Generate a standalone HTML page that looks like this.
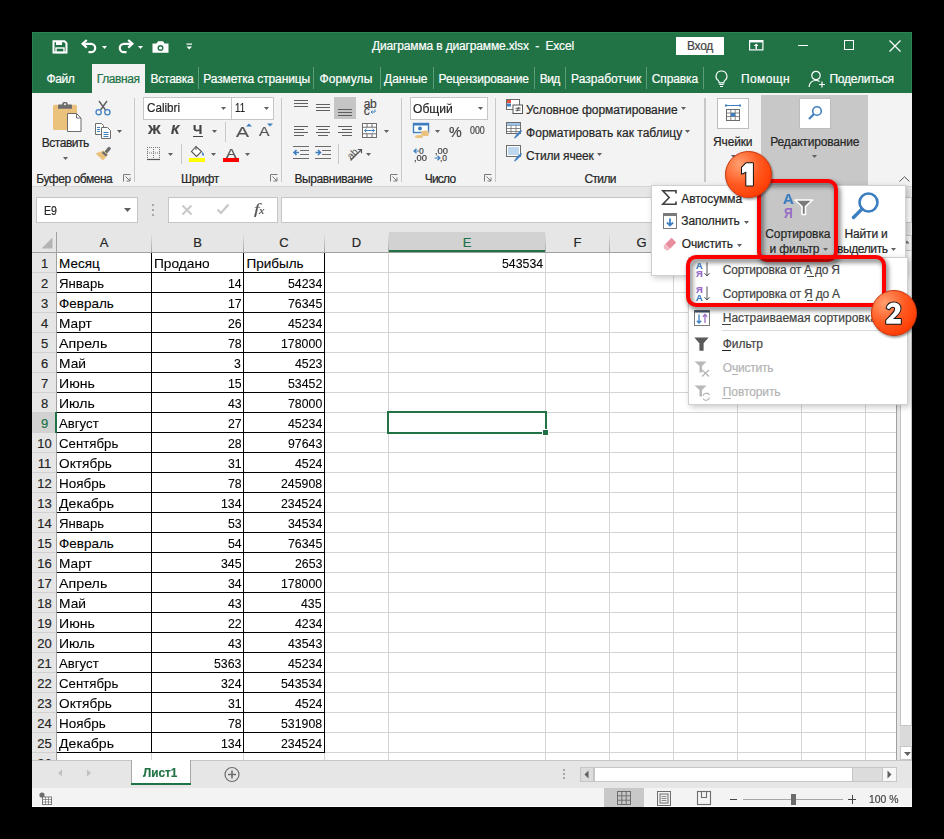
<!DOCTYPE html><html><head><meta charset="utf-8"><style>
html,body{margin:0;padding:0;width:944px;height:839px;overflow:hidden;background:#000}
body>*{position:absolute}
span{white-space:pre;transform-origin:0 0;font-family:'Liberation Sans',sans-serif;-webkit-text-stroke:0.2px currentColor}
svg{overflow:visible}
</style></head><body>
<div style="left:0px;top:0px;width:944px;height:839px;background:#000;"></div>
<div style="left:32px;top:32px;width:880px;height:775px;background:#f3f3f3;"></div>
<div style="left:32px;top:32px;width:880px;height:61px;background:#217346;"></div>
<div style="left:32px;top:32px;width:880px;height:1px;background:#2b8552;"></div>
<div style="left:32px;top:32px;width:1px;height:61px;background:#2b8552;"></div>
<div style="left:911px;top:32px;width:1px;height:61px;background:#2b8552;"></div>
<svg style="left:52px;top:40px;" width="16" height="14" viewBox="0 0 16 14"><path d="M1.5 1.2H12.5L14.5 3.2V12.5H1.5Z" fill="none" stroke="#fff" stroke-width="2"/><rect x="4" y="1.5" width="6" height="3.5" fill="#fff"/><rect x="4" y="8" width="8" height="4.5" fill="none" stroke="#fff" stroke-width="1.4"/></svg>
<svg style="left:81px;top:39px;" width="17" height="15" viewBox="0 0 17 15"><path d="M3 4.8H10A4.2 4.2 0 0 1 10 13.2H7.5" fill="none" stroke="#fff" stroke-width="2.2"/><path d="M5.8 1L1.6 4.8L5.8 8.6" fill="none" stroke="#fff" stroke-width="2.2"/></svg>
<svg style="left:102px;top:45.5px;" width="5" height="3" viewBox="0 0 5 3"><path d="M0 0H5L2.5 3Z" fill="#fff"/></svg>
<svg style="left:117px;top:39px;" width="17" height="15" viewBox="0 0 17 15"><path d="M14 4.8H7A4.2 4.2 0 0 0 7 13.2H9.5" fill="none" stroke="#fff" stroke-width="2.2"/><path d="M11.2 1L15.4 4.8L11.2 8.6" fill="none" stroke="#fff" stroke-width="2.2"/></svg>
<svg style="left:138px;top:45.5px;" width="5" height="3" viewBox="0 0 5 3"><path d="M0 0H5L2.5 3Z" fill="#fff"/></svg>
<svg style="left:152px;top:41px;" width="17" height="12" viewBox="0 0 17 12"><path d="M0.5 2.5H4.5L6 0.3H11L12.5 2.5H16.5V11.7H0.5Z" fill="#fff"/><circle cx="8.5" cy="7" r="3" fill="#217346"/><circle cx="8.5" cy="7" r="1.6" fill="#fff"/></svg>
<svg style="left:186px;top:43px;" width="7" height="7" viewBox="0 0 7 7"><rect x="0.5" y="0.5" width="5.5" height="1.2" fill="#fff"/><path d="M0.5 3.5H6L3.25 6.5Z" fill="#fff"/></svg>
<span style="left:372.00px;top:39.80px;font-size:12px;line-height:12px;color:#fff;font-weight:400;font-family:'Liberation Sans',sans-serif;letter-spacing:-0.150px;">Диаграмма в диаграмме.xlsx  -  Excel</span>
<div style="left:676px;top:37px;width:48px;height:18px;background:#fff;"></div>
<span style="left:687.00px;top:39.80px;font-size:12px;line-height:12px;color:#444;font-weight:400;font-family:'Liberation Sans',sans-serif;letter-spacing:-0.289px;">Вход</span>
<svg style="left:749px;top:40px;" width="15" height="11" viewBox="0 0 15 11"><rect x="0.6" y="0.6" width="13.3" height="9.3" fill="none" stroke="#fff" stroke-width="1.2"/><rect x="0.6" y="0.6" width="13.3" height="1.8" fill="#fff"/><path d="M7.25 3.5L4.8 6H6.5V9H8V6H9.7Z" fill="#fff"/></svg>
<div style="left:798px;top:45px;width:10px;height:1px;background:#fff;"></div>
<div style="left:844px;top:40px;width:10px;height:10px;box-sizing:border-box;border:1px solid #fff;background:transparent;"></div>
<svg style="left:889px;top:40px;" width="12" height="12" viewBox="0 0 12 12"><path d="M0.5 0.5L11.5 11.5M11.5 0.5L0.5 11.5" stroke="#fff" stroke-width="1.2"/></svg>
<div style="left:92px;top:64px;width:53px;height:29px;background:#f3f3f3;"></div>
<span style="left:46.40px;top:72.80px;font-size:12px;line-height:12px;color:#fff;font-weight:400;font-family:'Liberation Sans',sans-serif;letter-spacing:-0.379px;">Файл</span>
<span style="left:96.80px;top:72.80px;font-size:12px;line-height:12px;color:#217346;font-weight:400;font-family:'Liberation Sans',sans-serif;letter-spacing:-0.413px;">Главная</span>
<span style="left:150.60px;top:72.80px;font-size:12px;line-height:12px;color:#fff;font-weight:400;font-family:'Liberation Sans',sans-serif;letter-spacing:-0.273px;">Вставка</span>
<span style="left:203.30px;top:72.80px;font-size:12px;line-height:12px;color:#fff;font-weight:400;font-family:'Liberation Sans',sans-serif;letter-spacing:-0.128px;">Разметка страницы</span>
<span style="left:319.40px;top:72.80px;font-size:12px;line-height:12px;color:#fff;font-weight:400;font-family:'Liberation Sans',sans-serif;letter-spacing:0.112px;">Формулы</span>
<span style="left:384.00px;top:72.80px;font-size:12px;line-height:12px;color:#fff;font-weight:400;font-family:'Liberation Sans',sans-serif;letter-spacing:0.023px;">Данные</span>
<span style="left:438.60px;top:72.80px;font-size:12px;line-height:12px;color:#fff;font-weight:400;font-family:'Liberation Sans',sans-serif;letter-spacing:-0.184px;">Рецензирование</span>
<span style="left:539.80px;top:72.80px;font-size:12px;line-height:12px;color:#fff;font-weight:400;font-family:'Liberation Sans',sans-serif;letter-spacing:-0.573px;">Вид</span>
<span style="left:571.00px;top:72.80px;font-size:12px;line-height:12px;color:#fff;font-weight:400;font-family:'Liberation Sans',sans-serif;letter-spacing:0.038px;">Разработчик</span>
<span style="left:651.80px;top:72.80px;font-size:12px;line-height:12px;color:#fff;font-weight:400;font-family:'Liberation Sans',sans-serif;letter-spacing:-0.125px;">Справка</span>
<span style="left:741.00px;top:72.80px;font-size:12px;line-height:12px;color:#fff;font-weight:400;font-family:'Liberation Sans',sans-serif;letter-spacing:0.378px;">Помощн</span>
<span style="left:829.40px;top:72.80px;font-size:12px;line-height:12px;color:#fff;font-weight:400;font-family:'Liberation Sans',sans-serif;letter-spacing:-0.187px;">Поделиться</span>
<div style="left:198px;top:67px;width:1px;height:22px;background:#5c9c77;"></div>
<div style="left:313px;top:67px;width:1px;height:22px;background:#5c9c77;"></div>
<div style="left:380px;top:67px;width:1px;height:22px;background:#5c9c77;"></div>
<div style="left:433px;top:67px;width:1px;height:22px;background:#5c9c77;"></div>
<div style="left:534px;top:67px;width:1px;height:22px;background:#5c9c77;"></div>
<div style="left:565px;top:67px;width:1px;height:22px;background:#5c9c77;"></div>
<div style="left:646px;top:67px;width:1px;height:22px;background:#5c9c77;"></div>
<div style="left:703px;top:67px;width:1px;height:22px;background:#5c9c77;"></div>
<svg style="left:714px;top:70px;" width="15" height="18" viewBox="0 0 15 18"><path d="M7.5 1A5.3 5.3 0 0 0 4.3 10.6C5 11.3 5.2 12 5.2 12.8H9.8C9.8 12 10 11.3 10.7 10.6A5.3 5.3 0 0 0 7.5 1Z" fill="none" stroke="#fff" stroke-width="1.2"/><path d="M5.3 14.5H9.7M6 16.5H9" stroke="#fff" stroke-width="1.2"/></svg>
<svg style="left:808px;top:70px;" width="18" height="18" viewBox="0 0 18 18"><circle cx="8" cy="5.5" r="4.2" fill="none" stroke="#fff" stroke-width="1.2"/><path d="M1 17C1.5 12.5 4 10.5 8 10.5C9.5 10.5 10.8 10.9 11.6 11.5" fill="none" stroke="#fff" stroke-width="1.2"/><path d="M14 11.5V17.5M11 14.5H17" stroke="#fff" stroke-width="1.2"/></svg>
<div style="left:32px;top:186px;width:880px;height:1px;background:#d6d6d6;"></div>
<div style="left:32px;top:187px;width:880px;height:45px;background:#e6e6e6;"></div>
<div style="left:134px;top:98px;width:1px;height:84px;background:#c8c8c8;"></div>
<div style="left:281px;top:98px;width:1px;height:84px;background:#c8c8c8;"></div>
<div style="left:401px;top:98px;width:1px;height:84px;background:#c8c8c8;"></div>
<div style="left:495px;top:98px;width:1px;height:84px;background:#c8c8c8;"></div>
<div style="left:704px;top:98px;width:1px;height:84px;background:#c8c8c8;"></div>
<span style="left:36.30px;top:172.50px;font-size:12px;line-height:12px;color:#262626;font-weight:400;font-family:'Liberation Sans',sans-serif;letter-spacing:-0.462px;">Буфер обмена</span>
<span style="left:181.00px;top:172.50px;font-size:12px;line-height:12px;color:#262626;font-weight:400;font-family:'Liberation Sans',sans-serif;letter-spacing:-0.297px;">Шрифт</span>
<span style="left:294.50px;top:172.50px;font-size:12px;line-height:12px;color:#262626;font-weight:400;font-family:'Liberation Sans',sans-serif;letter-spacing:-0.401px;">Выравнивание</span>
<span style="left:424.70px;top:172.50px;font-size:12px;line-height:12px;color:#262626;font-weight:400;font-family:'Liberation Sans',sans-serif;letter-spacing:-0.783px;">Число</span>
<span style="left:584.40px;top:172.50px;font-size:12px;line-height:12px;color:#262626;font-weight:400;font-family:'Liberation Sans',sans-serif;letter-spacing:-0.616px;">Стили</span>
<svg style="left:123px;top:174px;" width="8" height="8" viewBox="0 0 8 8"><path d="M0.5 7.5V0.5H7.5" fill="none" stroke="#7a7a7a" stroke-width="1"/><path d="M2.5 2.5L7 7M7 3.5V7H3.5" fill="none" stroke="#7a7a7a" stroke-width="1"/></svg>
<svg style="left:270px;top:174px;" width="8" height="8" viewBox="0 0 8 8"><path d="M0.5 7.5V0.5H7.5" fill="none" stroke="#7a7a7a" stroke-width="1"/><path d="M2.5 2.5L7 7M7 3.5V7H3.5" fill="none" stroke="#7a7a7a" stroke-width="1"/></svg>
<svg style="left:390px;top:174px;" width="8" height="8" viewBox="0 0 8 8"><path d="M0.5 7.5V0.5H7.5" fill="none" stroke="#7a7a7a" stroke-width="1"/><path d="M2.5 2.5L7 7M7 3.5V7H3.5" fill="none" stroke="#7a7a7a" stroke-width="1"/></svg>
<svg style="left:484px;top:174px;" width="8" height="8" viewBox="0 0 8 8"><path d="M0.5 7.5V0.5H7.5" fill="none" stroke="#7a7a7a" stroke-width="1"/><path d="M2.5 2.5L7 7M7 3.5V7H3.5" fill="none" stroke="#7a7a7a" stroke-width="1"/></svg>
<svg style="left:52px;top:101px;" width="30" height="32" viewBox="0 0 30 32"><rect x="1" y="3.8" width="24" height="25.2" rx="1.5" fill="#eac27c"/><path d="M6 7.8V4.6Q6 3.6 7 3.6H10.3V2.6Q10.3 1 12 1H14Q15.7 1 15.7 2.6V3.6H19Q20 3.6 20 4.6V7.8Z" fill="#6d6d6d"/><circle cx="13" cy="3.2" r="1" fill="#f3f3f3"/><path d="M15.5 12.5H24.5L29 17V30.5H15.5Z" fill="#fff" stroke="#6d6d6d" stroke-width="1"/><path d="M24.5 12.5V17H29" fill="none" stroke="#6d6d6d" stroke-width="1"/></svg>
<span style="left:41.70px;top:136.80px;font-size:12px;line-height:12px;color:#262626;font-weight:400;font-family:'Liberation Sans',sans-serif;letter-spacing:-0.459px;">Вставить</span>
<svg style="left:63px;top:157px;" width="5" height="3" viewBox="0 0 5 3"><path d="M0 0H5L2.5 3Z" fill="#5f5f5f"/></svg>
<svg style="left:95px;top:100px;" width="16" height="16" viewBox="0 0 16 16"><path d="M4 1L10.5 10M12 1L5.5 10" stroke="#5f5f5f" stroke-width="1.4"/><circle cx="3.6" cy="12.2" r="2.6" fill="none" stroke="#3f7fc0" stroke-width="1.3"/><circle cx="12.4" cy="12.2" r="2.6" fill="none" stroke="#3f7fc0" stroke-width="1.3"/></svg>
<svg style="left:95px;top:123px;" width="16" height="16" viewBox="0 0 16 16"><path d="M0.5 0.5H6.5L8.5 2.5V11.5H0.5Z" fill="#fff" stroke="#6d6d6d" stroke-width="1"/><path d="M6.5 4.5H12.5L15.5 7.5V15.5H6.5Z" fill="#fff" stroke="#6d6d6d" stroke-width="1"/><path d="M2 4.5H5M2 6.5H5M2 8.5H5M8.5 9.5H13.5M8.5 11.5H13.5M8.5 13.5H13.5" stroke="#3f7fc0" stroke-width="1"/></svg>
<svg style="left:117px;top:130px;" width="5" height="3" viewBox="0 0 5 3"><path d="M0 0H5L2.5 3Z" fill="#5f5f5f"/></svg>
<svg style="left:95px;top:146px;" width="17" height="16" viewBox="0 0 17 16"><path d="M9.5 5.5L12.8 1.5A1.5 1.5 0 0 1 15.5 3.5L12 7.5Z" fill="#6d6d6d"/><path d="M8.5 4.5L13 8.5L8 14.5L0.5 7.5Z" fill="#eac27c"/><path d="M8.3 5.2L12.5 8.8L11 10.6L6.8 7Z" fill="#6d6d6d"/></svg>
<div style="left:143px;top:97px;width:89px;height:23px;box-sizing:border-box;border:1px solid #c6c6c6;background:#fff;"></div>
<div style="left:231px;top:97px;width:43px;height:23px;box-sizing:border-box;border:1px solid #c6c6c6;background:#fff;"></div>
<span style="left:146.50px;top:102.38px;font-size:12.5px;line-height:12.5px;color:#262626;font-weight:400;font-family:'Liberation Sans',sans-serif;transform:scaleX(0.9312);">Calibri</span>
<span style="left:234.80px;top:102.38px;font-size:12.5px;line-height:12.5px;color:#262626;font-weight:400;font-family:'Liberation Sans',sans-serif;transform:scaleX(0.7702);">11</span>
<svg style="left:221px;top:107px;" width="5" height="3" viewBox="0 0 5 3"><path d="M0 0H5L2.5 3Z" fill="#5f5f5f"/></svg>
<svg style="left:264px;top:107px;" width="5" height="3" viewBox="0 0 5 3"><path d="M0 0H5L2.5 3Z" fill="#5f5f5f"/></svg>
<span style="left:147.80px;top:124.38px;font-size:12.5px;line-height:12.5px;color:#444;font-weight:700;font-family:'Liberation Sans',sans-serif;transform:scaleX(1.1227);">Ж</span>
<span style="left:171.00px;top:124.38px;font-size:12.5px;line-height:12.5px;color:#444;font-weight:700;font-family:'Liberation Sans',sans-serif;transform:scaleX(1.0863);font-style:italic;">К</span>
<span style="left:193.30px;top:124.38px;font-size:12.5px;line-height:12.5px;color:#444;font-weight:700;font-family:'Liberation Sans',sans-serif;transform:scaleX(1.0572);">Ч</span>
<div style="left:193px;top:136px;width:10px;height:1.3px;background:#444;"></div>
<svg style="left:212px;top:130px;" width="5" height="3" viewBox="0 0 5 3"><path d="M0 0H5L2.5 3Z" fill="#5f5f5f"/></svg>
<div style="left:225px;top:122px;width:1px;height:20px;background:#c8c8c8;"></div>
<span style="left:236.00px;top:124.25px;font-size:15px;line-height:15px;color:#555;font-weight:400;font-family:'Liberation Sans',sans-serif;transform:scaleX(1.2980);">A</span>
<svg style="left:246px;top:123px;" width="6" height="4" viewBox="0 0 6 4"><path d="M0 3.5L3 0.5L6 3.5Z" fill="#3f7fc0"/></svg>
<span style="left:259.00px;top:126.38px;font-size:12.5px;line-height:12.5px;color:#555;font-weight:400;font-family:'Liberation Sans',sans-serif;transform:scaleX(1.2584);">A</span>
<svg style="left:267px;top:123px;" width="6" height="4" viewBox="0 0 6 4"><path d="M0 0.5L3 3.5L6 0.5Z" fill="#3f7fc0"/></svg>
<svg style="left:146px;top:146px;" width="15" height="14" viewBox="0 0 15 14"><path d="M1 1.5H14M1 7H14M1.5 1V13M7.5 1V13M13.5 1V13" stroke="#777" stroke-width="1" stroke-dasharray="1 1"/><path d="M1 13.5H14" stroke="#555" stroke-width="1.2"/></svg>
<svg style="left:168px;top:153px;" width="5" height="3" viewBox="0 0 5 3"><path d="M0 0H5L2.5 3Z" fill="#5f5f5f"/></svg>
<div style="left:181px;top:144px;width:1px;height:20px;background:#c8c8c8;"></div>
<svg style="left:189px;top:145px;" width="18" height="13" viewBox="0 0 18 13"><path d="M7 1.5L2.5 6.5L7.5 11.5L12.5 6.5Z" fill="#fff" stroke="#555" stroke-width="1.1"/><path d="M7 1.5V5" stroke="#555" stroke-width="1"/><path d="M13.5 7C15 8.5 15.5 10 14.2 11C13 10 12.5 8.5 13.5 7Z" fill="#3f7fc0"/></svg>
<div style="left:189px;top:158px;width:16px;height:4px;background:#ffff00;"></div>
<svg style="left:210.5px;top:153px;" width="5" height="3" viewBox="0 0 5 3"><path d="M0 0H5L2.5 3Z" fill="#5f5f5f"/></svg>
<span style="left:225.80px;top:146.65px;font-size:13px;line-height:13px;color:#555;font-weight:400;font-family:'Liberation Sans',sans-serif;transform:scaleX(1.2108);">A</span>
<div style="left:223px;top:158px;width:16px;height:4px;background:#ff0000;"></div>
<svg style="left:244.7px;top:153px;" width="5" height="3" viewBox="0 0 5 3"><path d="M0 0H5L2.5 3Z" fill="#5f5f5f"/></svg>
<div style="left:294px;top:100px;width:14px;height:1.3px;background:#5f5f5f;"></div>
<div style="left:294px;top:103px;width:14px;height:1.3px;background:#5f5f5f;"></div>
<div style="left:294px;top:106px;width:14px;height:1.3px;background:#5f5f5f;"></div>
<div style="left:316px;top:104px;width:14px;height:1.3px;background:#5f5f5f;"></div>
<div style="left:316px;top:107px;width:14px;height:1.3px;background:#5f5f5f;"></div>
<div style="left:316px;top:110px;width:14px;height:1.3px;background:#5f5f5f;"></div>
<div style="left:334px;top:97px;width:22px;height:22px;background:#c5c5c5;"></div>
<div style="left:338px;top:109px;width:14px;height:1.3px;background:#5f5f5f;"></div>
<div style="left:338px;top:112px;width:14px;height:1.3px;background:#5f5f5f;"></div>
<div style="left:338px;top:115px;width:14px;height:1.3px;background:#5f5f5f;"></div>
<span style="left:363.70px;top:97.80px;font-size:12px;line-height:12px;color:#444;font-weight:400;font-family:'Liberation Sans',sans-serif;letter-spacing:-0.430px;-webkit-text-stroke:0.2px #444;">ab</span>
<span style="left:363.70px;top:105.30px;font-size:12px;line-height:12px;color:#444;font-weight:400;font-family:'Liberation Sans',sans-serif;letter-spacing:0.500px;-webkit-text-stroke:0.2px #444;">c</span>
<svg style="left:370px;top:109px;" width="6" height="5" viewBox="0 0 6 5"><path d="M5 0.5V3H1M2.5 1.5L1 3L2.5 4.5" fill="none" stroke="#3f7fc0" stroke-width="1"/></svg>
<div style="left:294px;top:126px;width:14px;height:1px;background:#5f5f5f;"></div>
<div style="left:316px;top:126px;width:14px;height:1px;background:#5f5f5f;"></div>
<div style="left:338px;top:126px;width:14px;height:1px;background:#5f5f5f;"></div>
<div style="left:294px;top:129px;width:10px;height:1px;background:#5f5f5f;"></div>
<div style="left:318px;top:129px;width:10px;height:1px;background:#5f5f5f;"></div>
<div style="left:342px;top:129px;width:10px;height:1px;background:#5f5f5f;"></div>
<div style="left:294px;top:132px;width:14px;height:1px;background:#5f5f5f;"></div>
<div style="left:316px;top:132px;width:14px;height:1px;background:#5f5f5f;"></div>
<div style="left:338px;top:132px;width:14px;height:1px;background:#5f5f5f;"></div>
<div style="left:294px;top:135px;width:10px;height:1px;background:#5f5f5f;"></div>
<div style="left:318px;top:135px;width:10px;height:1px;background:#5f5f5f;"></div>
<div style="left:342px;top:135px;width:10px;height:1px;background:#5f5f5f;"></div>
<svg style="left:362px;top:123px;" width="15" height="15" viewBox="0 0 15 15"><rect x="0.5" y="0.5" width="14" height="14" fill="#fff" stroke="#6d6d6d" stroke-width="1"/><path d="M0.5 4.2H14.5M0.5 10.8H14.5M5 0.5V4.2M10 0.5V4.2M5 10.8V14.5M10 10.8V14.5" stroke="#6d6d6d" stroke-width="1"/><path d="M2.5 7.5H12.5M4.5 5.8L2.5 7.5L4.5 9.2M10.5 5.8L12.5 7.5L10.5 9.2" fill="none" stroke="#3f7fc0" stroke-width="1"/></svg>
<svg style="left:384px;top:130px;" width="5" height="3" viewBox="0 0 5 3"><path d="M0 0H5L2.5 3Z" fill="#5f5f5f"/></svg>
<svg style="left:293px;top:146px;" width="16" height="14" viewBox="0 0 16 14"><path d="M0 0.5H16M7 4.5H16M7 8.5H16M0 12.5H16" stroke="#6d6d6d" stroke-width="1"/><path d="M1 6.5H6M3.5 4L1 6.5L3.5 9" fill="none" stroke="#3f7fc0" stroke-width="1.6"/></svg>
<svg style="left:315px;top:146px;" width="16" height="14" viewBox="0 0 16 14"><path d="M0 0.5H16M7 4.5H16M7 8.5H16M0 12.5H16" stroke="#6d6d6d" stroke-width="1"/><path d="M0.5 6.5H5.5M3 4L5.5 6.5L3 9" fill="none" stroke="#3f7fc0" stroke-width="1.6"/></svg>
<div style="left:338px;top:144px;width:1px;height:20px;background:#c8c8c8;"></div>
<svg style="left:346px;top:146px;" width="17" height="15" viewBox="0 0 17 15"><g transform="rotate(-45 7 7)"><text x="0.5" y="10.5" font-size="10" font-family="Liberation Sans" fill="#555">ab</text></g><path d="M4.5 14.5L15 4M11.8 3.5H15.5V7.2" fill="none" stroke="#555" stroke-width="1.2"/></svg>
<svg style="left:366px;top:153px;" width="5" height="3" viewBox="0 0 5 3"><path d="M0 0H5L2.5 3Z" fill="#5f5f5f"/></svg>
<div style="left:410px;top:97px;width:78px;height:23px;box-sizing:border-box;border:1px solid #c6c6c6;background:#fff;"></div>
<span style="left:413.40px;top:101.95px;font-size:13px;line-height:13px;color:#262626;font-weight:400;font-family:'Liberation Sans',sans-serif;transform:scaleX(0.9303);">Общий</span>
<svg style="left:478px;top:107px;" width="5" height="3" viewBox="0 0 5 3"><path d="M0 0H5L2.5 3Z" fill="#5f5f5f"/></svg>
<svg style="left:413px;top:123px;" width="17" height="16" viewBox="0 0 17 16"><rect x="0.5" y="0.5" width="15" height="9" fill="#fff" stroke="#3f7fc0" stroke-width="1.4"/><rect x="0.5" y="0.5" width="15" height="2" fill="#3f7fc0"/><circle cx="7" cy="5.5" r="2" fill="#3f7fc0"/><ellipse cx="12" cy="9" rx="4" ry="1.6" fill="#eac27c"/><ellipse cx="12" cy="11.5" rx="4" ry="1.6" fill="#eac27c"/><ellipse cx="6" cy="13.5" rx="4" ry="1.6" fill="#eac27c"/></svg>
<svg style="left:435px;top:130px;" width="5" height="3" viewBox="0 0 5 3"><path d="M0 0H5L2.5 3Z" fill="#5f5f5f"/></svg>
<span style="left:449.30px;top:124.80px;font-size:14px;line-height:14px;color:#444;font-weight:400;font-family:'Liberation Sans',sans-serif;transform:scaleX(1.0198);">%</span>
<span style="left:469.60px;top:125.60px;font-size:10px;line-height:10px;color:#444;font-weight:400;font-family:'Liberation Sans',sans-serif;transform:scaleX(0.8869);">000</span>
<span style="left:419.00px;top:146.78px;font-size:8.5px;line-height:8.5px;color:#444;font-weight:400;font-family:'Liberation Sans',sans-serif;">0</span>
<span style="left:414.00px;top:154.08px;font-size:8.5px;line-height:8.5px;color:#444;font-weight:400;font-family:'Liberation Sans',sans-serif;transform:scaleX(1.0991);">,00</span>
<svg style="left:413px;top:148px;" width="7" height="7" viewBox="0 0 7 7"><path d="M6.5 3H1M3.5 0.7L1 3L3.5 5.3" fill="none" stroke="#3f7fc0" stroke-width="1.2"/></svg>
<span style="left:434.50px;top:146.78px;font-size:8.5px;line-height:8.5px;color:#444;font-weight:400;font-family:'Liberation Sans',sans-serif;transform:scaleX(1.0991);">,00</span>
<span style="left:440.00px;top:154.08px;font-size:8.5px;line-height:8.5px;color:#444;font-weight:400;font-family:'Liberation Sans',sans-serif;">,0</span>
<svg style="left:434px;top:155px;" width="7" height="7" viewBox="0 0 7 7"><path d="M0.5 3H6M3.5 0.7L6 3L3.5 5.3" fill="none" stroke="#3f7fc0" stroke-width="1.2"/></svg>
<svg style="left:506px;top:99px;" width="17" height="15" viewBox="0 0 17 15"><rect x="0.5" y="0.5" width="13" height="10" fill="#fff" stroke="#6d6d6d"/><rect x="1" y="1" width="4" height="3" fill="#e0503a"/><rect x="1" y="4.5" width="4" height="3" fill="#3f7fc0"/><rect x="7" y="6" width="9.5" height="8.5" fill="#fff" stroke="#555"/><path d="M9.5 9.2H14.5M9.5 11.2H14.5M13 8L11 12.5" stroke="#444" stroke-width="0.9"/></svg>
<svg style="left:506px;top:122px;" width="17" height="17" viewBox="0 0 17 17"><rect x="0.5" y="0.5" width="14" height="11" fill="#fff" stroke="#6d6d6d"/><path d="M0.5 3.5H14.5M0.5 6.5H14.5M0.5 9.5H14.5M5 0.5V11.5M10 0.5V11.5" stroke="#6d6d6d" stroke-width="0.8"/><rect x="1" y="1" width="13" height="2.5" fill="#9dc3e6"/><path d="M8 16L11 11.5L15 8L16 9L13 13L9 16.5Z" fill="#3f7fc0"/></svg>
<svg style="left:506px;top:145px;" width="17" height="17" viewBox="0 0 17 17"><rect x="0.5" y="0.5" width="14" height="11" fill="#fff" stroke="#6d6d6d"/><rect x="2" y="2" width="11" height="8" fill="#bdd7ee"/><path d="M8 16L11 11.5L15 8L16 9L13 13L9 16.5Z" fill="#3f7fc0"/></svg>
<span style="left:526.10px;top:103.80px;font-size:12px;line-height:12px;color:#262626;font-weight:400;font-family:'Liberation Sans',sans-serif;letter-spacing:-0.051px;">Условное форматирование</span>
<svg style="left:681px;top:107px;" width="5" height="3" viewBox="0 0 5 3"><path d="M0 0H5L2.5 3Z" fill="#5f5f5f"/></svg>
<span style="left:526.10px;top:126.80px;font-size:12px;line-height:12px;color:#262626;font-weight:400;font-family:'Liberation Sans',sans-serif;">Форматировать как таблицу</span>
<svg style="left:685px;top:130px;" width="5" height="3" viewBox="0 0 5 3"><path d="M0 0H5L2.5 3Z" fill="#5f5f5f"/></svg>
<span style="left:526.10px;top:149.80px;font-size:12px;line-height:12px;color:#262626;font-weight:400;font-family:'Liberation Sans',sans-serif;letter-spacing:-0.151px;">Стили ячеек</span>
<svg style="left:597px;top:153px;" width="5" height="3" viewBox="0 0 5 3"><path d="M0 0H5L2.5 3Z" fill="#5f5f5f"/></svg>
<div style="left:705px;top:98px;width:1px;height:84px;background:#c8c8c8;"></div>
<div style="left:717px;top:98px;width:32px;height:31px;box-sizing:border-box;border:1px solid #bdbdbd;background:#fff;"></div>
<svg style="left:724px;top:104px;" width="18" height="19" viewBox="0 0 18 19"><path d="M1 1.5H17M2 0V3M16 0V3M5 1.5H13" stroke="#3f7fc0" stroke-width="1"/><rect x="2.5" y="5.5" width="13" height="11" fill="#fff" stroke="#6d6d6d"/><path d="M2.5 9H15.5M2.5 12.5H15.5M6.8 5.5V16.5M11.2 5.5V16.5" stroke="#6d6d6d" stroke-width="0.8"/><rect x="6.8" y="9" width="4.4" height="3.5" fill="#3f7fc0"/></svg>
<span style="left:713.10px;top:135.80px;font-size:12px;line-height:12px;color:#262626;font-weight:400;font-family:'Liberation Sans',sans-serif;letter-spacing:-0.158px;">Ячейки</span>
<svg style="left:731px;top:155px;" width="5" height="3" viewBox="0 0 5 3"><path d="M0 0H5L2.5 3Z" fill="#5f5f5f"/></svg>
<div style="left:761px;top:95px;width:107px;height:91px;background:#c8c8c8;"></div>
<div style="left:799px;top:98px;width:32px;height:31px;box-sizing:border-box;border:1px solid #bdbdbd;background:#fff;"></div>
<svg style="left:807px;top:105px;" width="16" height="16" viewBox="0 0 16 16"><circle cx="10" cy="6" r="4.3" fill="none" stroke="#3f7fc0" stroke-width="1.6"/><path d="M7 9L2 14" stroke="#3f7fc0" stroke-width="2.2"/></svg>
<span style="left:770.30px;top:135.80px;font-size:12px;line-height:12px;color:#262626;font-weight:400;font-family:'Liberation Sans',sans-serif;letter-spacing:-0.180px;">Редактирование</span>
<svg style="left:812px;top:155px;" width="5" height="3" viewBox="0 0 5 3"><path d="M0 0H5L2.5 3Z" fill="#5f5f5f"/></svg>
<svg style="left:899px;top:176px;" width="11" height="6" viewBox="0 0 11 6"><path d="M0.5 5.5L5.5 0.8L10.5 5.5" fill="none" stroke="#555" stroke-width="1"/></svg>
<div style="left:36px;top:197px;width:102px;height:26px;box-sizing:border-box;border:1px solid #c6c6c6;background:#fff;"></div>
<span style="left:43.50px;top:204.45px;font-size:13px;line-height:13px;color:#262626;font-weight:400;font-family:'Liberation Sans',sans-serif;transform:scaleX(0.8173);">E9</span>
<svg style="left:124px;top:208px;" width="7" height="4" viewBox="0 0 7 4"><path d="M0 0H7L3.5 4Z" fill="#5f5f5f"/></svg>
<div style="left:152px;top:204px;width:2px;height:2px;background:#a6a6a6;"></div>
<div style="left:152px;top:209px;width:2px;height:2px;background:#a6a6a6;"></div>
<div style="left:152px;top:214px;width:2px;height:2px;background:#a6a6a6;"></div>
<div style="left:168px;top:197px;width:110px;height:26px;box-sizing:border-box;border:1px solid #c6c6c6;background:#fff;"></div>
<svg style="left:181px;top:204px;" width="12" height="12" viewBox="0 0 12 12"><path d="M1.5 1.5L10.5 10.5M10.5 1.5L1.5 10.5" stroke="#c8c8c8" stroke-width="2"/></svg>
<svg style="left:216px;top:203px;" width="14" height="12" viewBox="0 0 14 12"><path d="M1.5 6.5L5 10L12.5 1.5" fill="none" stroke="#c8c8c8" stroke-width="2.2"/></svg>
<span style="left:254.00px;top:202.60px;font-size:14px;line-height:14px;color:#555;font-weight:400;font-family:'Liberation Serif',sans-serif;transform:scaleX(1.3913);font-style:italic;">f</span>
<span style="left:258.50px;top:205.15px;font-size:11px;line-height:11px;color:#555;font-weight:400;font-family:'Liberation Serif',sans-serif;transform:scaleX(1.0909);font-style:italic;">x</span>
<div style="left:281px;top:197px;width:631px;height:26px;box-sizing:border-box;border:1px solid #c6c6c6;background:#fff;"></div>
<div style="left:32px;top:232px;width:864px;height:20px;background:#e6e6e6;"></div>
<div style="left:32px;top:252px;width:24px;height:508px;background:#e6e6e6;"></div>
<div style="left:57px;top:253px;width:839px;height:507px;background:#fff;"></div>
<div style="left:57px;top:272px;width:839px;height:1px;background:#d4d4d4;"></div>
<div style="left:57px;top:292px;width:839px;height:1px;background:#d4d4d4;"></div>
<div style="left:57px;top:312px;width:839px;height:1px;background:#d4d4d4;"></div>
<div style="left:57px;top:332px;width:839px;height:1px;background:#d4d4d4;"></div>
<div style="left:57px;top:352px;width:839px;height:1px;background:#d4d4d4;"></div>
<div style="left:57px;top:372px;width:839px;height:1px;background:#d4d4d4;"></div>
<div style="left:57px;top:392px;width:839px;height:1px;background:#d4d4d4;"></div>
<div style="left:57px;top:412px;width:839px;height:1px;background:#d4d4d4;"></div>
<div style="left:57px;top:432px;width:839px;height:1px;background:#d4d4d4;"></div>
<div style="left:57px;top:452px;width:839px;height:1px;background:#d4d4d4;"></div>
<div style="left:57px;top:472px;width:839px;height:1px;background:#d4d4d4;"></div>
<div style="left:57px;top:492px;width:839px;height:1px;background:#d4d4d4;"></div>
<div style="left:57px;top:512px;width:839px;height:1px;background:#d4d4d4;"></div>
<div style="left:57px;top:532px;width:839px;height:1px;background:#d4d4d4;"></div>
<div style="left:57px;top:552px;width:839px;height:1px;background:#d4d4d4;"></div>
<div style="left:57px;top:572px;width:839px;height:1px;background:#d4d4d4;"></div>
<div style="left:57px;top:592px;width:839px;height:1px;background:#d4d4d4;"></div>
<div style="left:57px;top:612px;width:839px;height:1px;background:#d4d4d4;"></div>
<div style="left:57px;top:632px;width:839px;height:1px;background:#d4d4d4;"></div>
<div style="left:57px;top:652px;width:839px;height:1px;background:#d4d4d4;"></div>
<div style="left:57px;top:672px;width:839px;height:1px;background:#d4d4d4;"></div>
<div style="left:57px;top:692px;width:839px;height:1px;background:#d4d4d4;"></div>
<div style="left:57px;top:712px;width:839px;height:1px;background:#d4d4d4;"></div>
<div style="left:57px;top:732px;width:839px;height:1px;background:#d4d4d4;"></div>
<div style="left:57px;top:752px;width:839px;height:1px;background:#d4d4d4;"></div>
<div style="left:57px;top:772px;width:839px;height:1px;background:#d4d4d4;"></div>
<div style="left:151px;top:253px;width:1px;height:507px;background:#d4d4d4;"></div>
<div style="left:243px;top:253px;width:1px;height:507px;background:#d4d4d4;"></div>
<div style="left:324px;top:253px;width:1px;height:507px;background:#d4d4d4;"></div>
<div style="left:388px;top:253px;width:1px;height:507px;background:#d4d4d4;"></div>
<div style="left:545px;top:253px;width:1px;height:507px;background:#d4d4d4;"></div>
<div style="left:609px;top:253px;width:1px;height:507px;background:#d4d4d4;"></div>
<div style="left:673px;top:253px;width:1px;height:507px;background:#d4d4d4;"></div>
<div style="left:737px;top:253px;width:1px;height:507px;background:#d4d4d4;"></div>
<div style="left:801px;top:253px;width:1px;height:507px;background:#d4d4d4;"></div>
<div style="left:865px;top:253px;width:1px;height:507px;background:#d4d4d4;"></div>
<div style="left:389px;top:232px;width:156px;height:20px;background:#d2d2d2;"></div>
<div style="left:388px;top:250px;width:157px;height:2px;background:#217346;"></div>
<div style="left:151px;top:233px;width:1px;height:19px;background:linear-gradient(#e6e6e6,#a6a6a6);"></div>
<div style="left:243px;top:233px;width:1px;height:19px;background:linear-gradient(#e6e6e6,#a6a6a6);"></div>
<div style="left:324px;top:233px;width:1px;height:19px;background:linear-gradient(#e6e6e6,#a6a6a6);"></div>
<div style="left:388px;top:233px;width:1px;height:19px;background:linear-gradient(#e6e6e6,#a6a6a6);"></div>
<div style="left:545px;top:233px;width:1px;height:19px;background:linear-gradient(#e6e6e6,#a6a6a6);"></div>
<div style="left:609px;top:233px;width:1px;height:19px;background:linear-gradient(#e6e6e6,#a6a6a6);"></div>
<div style="left:673px;top:233px;width:1px;height:19px;background:linear-gradient(#e6e6e6,#a6a6a6);"></div>
<div style="left:737px;top:233px;width:1px;height:19px;background:linear-gradient(#e6e6e6,#a6a6a6);"></div>
<div style="left:801px;top:233px;width:1px;height:19px;background:linear-gradient(#e6e6e6,#a6a6a6);"></div>
<div style="left:865px;top:233px;width:1px;height:19px;background:linear-gradient(#e6e6e6,#a6a6a6);"></div>
<div style="left:32px;top:252px;width:864px;height:1px;background:#a0a0a0;"></div>
<div style="left:56px;top:232px;width:1px;height:528px;background:#a0a0a0;"></div>
<svg style="left:41px;top:237px;" width="12" height="12" viewBox="0 0 12 12"><path d="M11.5 0.5V11.5H0.5Z" fill="#b4b4b4"/></svg>
<span style="left:99.66px;top:235.95px;font-size:13px;line-height:13px;color:#262626;font-weight:400;font-family:'Liberation Sans',sans-serif;">A</span>
<span style="left:193.16px;top:235.95px;font-size:13px;line-height:13px;color:#262626;font-weight:400;font-family:'Liberation Sans',sans-serif;">B</span>
<span style="left:279.30px;top:235.95px;font-size:13px;line-height:13px;color:#262626;font-weight:400;font-family:'Liberation Sans',sans-serif;">C</span>
<span style="left:351.80px;top:235.95px;font-size:13px;line-height:13px;color:#262626;font-weight:400;font-family:'Liberation Sans',sans-serif;">D</span>
<span style="left:462.66px;top:235.95px;font-size:13px;line-height:13px;color:#217346;font-weight:400;font-family:'Liberation Sans',sans-serif;">E</span>
<span style="left:573.52px;top:235.95px;font-size:13px;line-height:13px;color:#262626;font-weight:400;font-family:'Liberation Sans',sans-serif;">F</span>
<span style="left:636.44px;top:235.95px;font-size:13px;line-height:13px;color:#262626;font-weight:400;font-family:'Liberation Sans',sans-serif;">G</span>
<span style="left:700.80px;top:235.95px;font-size:13px;line-height:13px;color:#262626;font-weight:400;font-family:'Liberation Sans',sans-serif;">H</span>
<span style="left:767.69px;top:235.95px;font-size:13px;line-height:13px;color:#262626;font-weight:400;font-family:'Liberation Sans',sans-serif;">I</span>
<span style="left:830.25px;top:235.95px;font-size:13px;line-height:13px;color:#262626;font-weight:400;font-family:'Liberation Sans',sans-serif;">J</span>
<span style="left:876.66px;top:235.95px;font-size:13px;line-height:13px;color:#262626;font-weight:400;font-family:'Liberation Sans',sans-serif;">K</span>
<div style="left:32px;top:272px;width:24px;height:1px;background:#d0d0d0;"></div>
<span style="left:40.88px;top:256.95px;font-size:13px;line-height:13px;color:#262626;font-weight:400;font-family:'Liberation Sans',sans-serif;">1</span>
<div style="left:32px;top:292px;width:24px;height:1px;background:#d0d0d0;"></div>
<span style="left:40.88px;top:276.95px;font-size:13px;line-height:13px;color:#262626;font-weight:400;font-family:'Liberation Sans',sans-serif;">2</span>
<div style="left:32px;top:312px;width:24px;height:1px;background:#d0d0d0;"></div>
<span style="left:40.88px;top:296.95px;font-size:13px;line-height:13px;color:#262626;font-weight:400;font-family:'Liberation Sans',sans-serif;">3</span>
<div style="left:32px;top:332px;width:24px;height:1px;background:#d0d0d0;"></div>
<span style="left:40.88px;top:316.95px;font-size:13px;line-height:13px;color:#262626;font-weight:400;font-family:'Liberation Sans',sans-serif;">4</span>
<div style="left:32px;top:352px;width:24px;height:1px;background:#d0d0d0;"></div>
<span style="left:40.88px;top:336.95px;font-size:13px;line-height:13px;color:#262626;font-weight:400;font-family:'Liberation Sans',sans-serif;">5</span>
<div style="left:32px;top:372px;width:24px;height:1px;background:#d0d0d0;"></div>
<span style="left:40.88px;top:356.95px;font-size:13px;line-height:13px;color:#262626;font-weight:400;font-family:'Liberation Sans',sans-serif;">6</span>
<div style="left:32px;top:392px;width:24px;height:1px;background:#d0d0d0;"></div>
<span style="left:40.88px;top:376.95px;font-size:13px;line-height:13px;color:#262626;font-weight:400;font-family:'Liberation Sans',sans-serif;">7</span>
<div style="left:32px;top:412px;width:24px;height:1px;background:#d0d0d0;"></div>
<span style="left:40.88px;top:396.95px;font-size:13px;line-height:13px;color:#262626;font-weight:400;font-family:'Liberation Sans',sans-serif;">8</span>
<div style="left:32px;top:432px;width:24px;height:1px;background:#d0d0d0;"></div>
<div style="left:32px;top:413px;width:24px;height:19px;background:#d2d2d2;"></div>
<div style="left:55px;top:412px;width:2px;height:21px;background:#217346;"></div>
<span style="left:40.88px;top:416.95px;font-size:13px;line-height:13px;color:#217346;font-weight:400;font-family:'Liberation Sans',sans-serif;">9</span>
<div style="left:32px;top:452px;width:24px;height:1px;background:#d0d0d0;"></div>
<span style="left:37.27px;top:436.95px;font-size:13px;line-height:13px;color:#262626;font-weight:400;font-family:'Liberation Sans',sans-serif;">10</span>
<div style="left:32px;top:472px;width:24px;height:1px;background:#d0d0d0;"></div>
<span style="left:37.75px;top:456.95px;font-size:13px;line-height:13px;color:#262626;font-weight:400;font-family:'Liberation Sans',sans-serif;">11</span>
<div style="left:32px;top:492px;width:24px;height:1px;background:#d0d0d0;"></div>
<span style="left:37.27px;top:476.95px;font-size:13px;line-height:13px;color:#262626;font-weight:400;font-family:'Liberation Sans',sans-serif;">12</span>
<div style="left:32px;top:512px;width:24px;height:1px;background:#d0d0d0;"></div>
<span style="left:37.27px;top:496.95px;font-size:13px;line-height:13px;color:#262626;font-weight:400;font-family:'Liberation Sans',sans-serif;">13</span>
<div style="left:32px;top:532px;width:24px;height:1px;background:#d0d0d0;"></div>
<span style="left:37.27px;top:516.95px;font-size:13px;line-height:13px;color:#262626;font-weight:400;font-family:'Liberation Sans',sans-serif;">14</span>
<div style="left:32px;top:552px;width:24px;height:1px;background:#d0d0d0;"></div>
<span style="left:37.27px;top:536.95px;font-size:13px;line-height:13px;color:#262626;font-weight:400;font-family:'Liberation Sans',sans-serif;">15</span>
<div style="left:32px;top:572px;width:24px;height:1px;background:#d0d0d0;"></div>
<span style="left:37.27px;top:556.95px;font-size:13px;line-height:13px;color:#262626;font-weight:400;font-family:'Liberation Sans',sans-serif;">16</span>
<div style="left:32px;top:592px;width:24px;height:1px;background:#d0d0d0;"></div>
<span style="left:37.27px;top:576.95px;font-size:13px;line-height:13px;color:#262626;font-weight:400;font-family:'Liberation Sans',sans-serif;">17</span>
<div style="left:32px;top:612px;width:24px;height:1px;background:#d0d0d0;"></div>
<span style="left:37.27px;top:596.95px;font-size:13px;line-height:13px;color:#262626;font-weight:400;font-family:'Liberation Sans',sans-serif;">18</span>
<div style="left:32px;top:632px;width:24px;height:1px;background:#d0d0d0;"></div>
<span style="left:37.27px;top:616.95px;font-size:13px;line-height:13px;color:#262626;font-weight:400;font-family:'Liberation Sans',sans-serif;">19</span>
<div style="left:32px;top:652px;width:24px;height:1px;background:#d0d0d0;"></div>
<span style="left:37.27px;top:636.95px;font-size:13px;line-height:13px;color:#262626;font-weight:400;font-family:'Liberation Sans',sans-serif;">20</span>
<div style="left:32px;top:672px;width:24px;height:1px;background:#d0d0d0;"></div>
<span style="left:37.27px;top:656.95px;font-size:13px;line-height:13px;color:#262626;font-weight:400;font-family:'Liberation Sans',sans-serif;">21</span>
<div style="left:32px;top:692px;width:24px;height:1px;background:#d0d0d0;"></div>
<span style="left:37.27px;top:676.95px;font-size:13px;line-height:13px;color:#262626;font-weight:400;font-family:'Liberation Sans',sans-serif;">22</span>
<div style="left:32px;top:712px;width:24px;height:1px;background:#d0d0d0;"></div>
<span style="left:37.27px;top:696.95px;font-size:13px;line-height:13px;color:#262626;font-weight:400;font-family:'Liberation Sans',sans-serif;">23</span>
<div style="left:32px;top:732px;width:24px;height:1px;background:#d0d0d0;"></div>
<span style="left:37.27px;top:716.95px;font-size:13px;line-height:13px;color:#262626;font-weight:400;font-family:'Liberation Sans',sans-serif;">24</span>
<div style="left:32px;top:752px;width:24px;height:1px;background:#d0d0d0;"></div>
<span style="left:37.27px;top:736.95px;font-size:13px;line-height:13px;color:#262626;font-weight:400;font-family:'Liberation Sans',sans-serif;">25</span>
<span style="left:37.27px;top:756.95px;font-size:13px;line-height:13px;color:#262626;font-weight:400;font-family:'Liberation Sans',sans-serif;">26</span>
<span style="left:59.00px;top:256.52px;font-size:13.5px;line-height:13.5px;color:#000;font-weight:400;font-family:'Liberation Sans',sans-serif;-webkit-text-stroke:0.1px #000;">Месяц</span>
<span style="left:154.30px;top:256.52px;font-size:13.5px;line-height:13.5px;color:#000;font-weight:400;font-family:'Liberation Sans',sans-serif;transform:scaleX(1.0168);-webkit-text-stroke:0.1px #000;">Продано</span>
<span style="left:246.50px;top:256.52px;font-size:13.5px;line-height:13.5px;color:#000;font-weight:400;font-family:'Liberation Sans',sans-serif;-webkit-text-stroke:0.1px #000;">Прибыль</span>
<span style="left:59.00px;top:276.52px;font-size:13.5px;line-height:13.5px;color:#000;font-weight:400;font-family:'Liberation Sans',sans-serif;transform:scaleX(0.9745);-webkit-text-stroke:0.1px #000;">Январь</span>
<span style="left:227.60px;top:276.52px;font-size:13.5px;line-height:13.5px;color:#000;font-weight:400;font-family:'Liberation Sans',sans-serif;transform:scaleX(0.9114);-webkit-text-stroke:0.1px #000;">14</span>
<span style="left:287.75px;top:276.52px;font-size:13.5px;line-height:13.5px;color:#000;font-weight:400;font-family:'Liberation Sans',sans-serif;transform:scaleX(0.9122);-webkit-text-stroke:0.1px #000;">54234</span>
<span style="left:59.00px;top:296.52px;font-size:13.5px;line-height:13.5px;color:#000;font-weight:400;font-family:'Liberation Sans',sans-serif;-webkit-text-stroke:0.1px #000;">Февраль</span>
<span style="left:227.60px;top:296.52px;font-size:13.5px;line-height:13.5px;color:#000;font-weight:400;font-family:'Liberation Sans',sans-serif;transform:scaleX(0.9114);-webkit-text-stroke:0.1px #000;">17</span>
<span style="left:287.75px;top:296.52px;font-size:13.5px;line-height:13.5px;color:#000;font-weight:400;font-family:'Liberation Sans',sans-serif;transform:scaleX(0.9122);-webkit-text-stroke:0.1px #000;">76345</span>
<span style="left:59.00px;top:316.52px;font-size:13.5px;line-height:13.5px;color:#000;font-weight:400;font-family:'Liberation Sans',sans-serif;transform:scaleX(1.0120);-webkit-text-stroke:0.1px #000;">Март</span>
<span style="left:227.60px;top:316.52px;font-size:13.5px;line-height:13.5px;color:#000;font-weight:400;font-family:'Liberation Sans',sans-serif;transform:scaleX(0.9114);-webkit-text-stroke:0.1px #000;">26</span>
<span style="left:287.75px;top:316.52px;font-size:13.5px;line-height:13.5px;color:#000;font-weight:400;font-family:'Liberation Sans',sans-serif;transform:scaleX(0.9122);-webkit-text-stroke:0.1px #000;">45234</span>
<span style="left:59.00px;top:336.52px;font-size:13.5px;line-height:13.5px;color:#000;font-weight:400;font-family:'Liberation Sans',sans-serif;transform:scaleX(1.0547);-webkit-text-stroke:0.1px #000;">Апрель</span>
<span style="left:227.60px;top:336.52px;font-size:13.5px;line-height:13.5px;color:#000;font-weight:400;font-family:'Liberation Sans',sans-serif;transform:scaleX(0.9114);-webkit-text-stroke:0.1px #000;">78</span>
<span style="left:280.90px;top:336.52px;font-size:13.5px;line-height:13.5px;color:#000;font-weight:400;font-family:'Liberation Sans',sans-serif;transform:scaleX(0.9121);-webkit-text-stroke:0.1px #000;">178000</span>
<span style="left:59.00px;top:356.52px;font-size:13.5px;line-height:13.5px;color:#000;font-weight:400;font-family:'Liberation Sans',sans-serif;transform:scaleX(1.0207);-webkit-text-stroke:0.1px #000;">Май</span>
<span style="left:234.45px;top:356.52px;font-size:13.5px;line-height:13.5px;color:#000;font-weight:400;font-family:'Liberation Sans',sans-serif;transform:scaleX(0.9114);-webkit-text-stroke:0.1px #000;">3</span>
<span style="left:294.60px;top:356.52px;font-size:13.5px;line-height:13.5px;color:#000;font-weight:400;font-family:'Liberation Sans',sans-serif;transform:scaleX(0.9119);-webkit-text-stroke:0.1px #000;">4523</span>
<span style="left:59.00px;top:376.52px;font-size:13.5px;line-height:13.5px;color:#000;font-weight:400;font-family:'Liberation Sans',sans-serif;transform:scaleX(1.0458);-webkit-text-stroke:0.1px #000;">Июнь</span>
<span style="left:227.60px;top:376.52px;font-size:13.5px;line-height:13.5px;color:#000;font-weight:400;font-family:'Liberation Sans',sans-serif;transform:scaleX(0.9114);-webkit-text-stroke:0.1px #000;">15</span>
<span style="left:287.75px;top:376.52px;font-size:13.5px;line-height:13.5px;color:#000;font-weight:400;font-family:'Liberation Sans',sans-serif;transform:scaleX(0.9122);-webkit-text-stroke:0.1px #000;">53452</span>
<span style="left:59.00px;top:396.52px;font-size:13.5px;line-height:13.5px;color:#000;font-weight:400;font-family:'Liberation Sans',sans-serif;transform:scaleX(1.0420);-webkit-text-stroke:0.1px #000;">Июль</span>
<span style="left:227.60px;top:396.52px;font-size:13.5px;line-height:13.5px;color:#000;font-weight:400;font-family:'Liberation Sans',sans-serif;transform:scaleX(0.9114);-webkit-text-stroke:0.1px #000;">43</span>
<span style="left:287.75px;top:396.52px;font-size:13.5px;line-height:13.5px;color:#000;font-weight:400;font-family:'Liberation Sans',sans-serif;transform:scaleX(0.9122);-webkit-text-stroke:0.1px #000;">78000</span>
<span style="left:59.00px;top:416.52px;font-size:13.5px;line-height:13.5px;color:#000;font-weight:400;font-family:'Liberation Sans',sans-serif;transform:scaleX(0.9769);-webkit-text-stroke:0.1px #000;">Август</span>
<span style="left:227.60px;top:416.52px;font-size:13.5px;line-height:13.5px;color:#000;font-weight:400;font-family:'Liberation Sans',sans-serif;transform:scaleX(0.9114);-webkit-text-stroke:0.1px #000;">27</span>
<span style="left:287.75px;top:416.52px;font-size:13.5px;line-height:13.5px;color:#000;font-weight:400;font-family:'Liberation Sans',sans-serif;transform:scaleX(0.9122);-webkit-text-stroke:0.1px #000;">45234</span>
<span style="left:59.00px;top:436.52px;font-size:13.5px;line-height:13.5px;color:#000;font-weight:400;font-family:'Liberation Sans',sans-serif;transform:scaleX(0.9821);-webkit-text-stroke:0.1px #000;">Сентябрь</span>
<span style="left:227.60px;top:436.52px;font-size:13.5px;line-height:13.5px;color:#000;font-weight:400;font-family:'Liberation Sans',sans-serif;transform:scaleX(0.9114);-webkit-text-stroke:0.1px #000;">28</span>
<span style="left:287.75px;top:436.52px;font-size:13.5px;line-height:13.5px;color:#000;font-weight:400;font-family:'Liberation Sans',sans-serif;transform:scaleX(0.9122);-webkit-text-stroke:0.1px #000;">97643</span>
<span style="left:59.00px;top:456.52px;font-size:13.5px;line-height:13.5px;color:#000;font-weight:400;font-family:'Liberation Sans',sans-serif;transform:scaleX(1.0128);-webkit-text-stroke:0.1px #000;">Октябрь</span>
<span style="left:227.60px;top:456.52px;font-size:13.5px;line-height:13.5px;color:#000;font-weight:400;font-family:'Liberation Sans',sans-serif;transform:scaleX(0.9114);-webkit-text-stroke:0.1px #000;">31</span>
<span style="left:294.60px;top:456.52px;font-size:13.5px;line-height:13.5px;color:#000;font-weight:400;font-family:'Liberation Sans',sans-serif;transform:scaleX(0.9119);-webkit-text-stroke:0.1px #000;">4524</span>
<span style="left:59.00px;top:476.52px;font-size:13.5px;line-height:13.5px;color:#000;font-weight:400;font-family:'Liberation Sans',sans-serif;transform:scaleX(0.9969);-webkit-text-stroke:0.1px #000;">Ноябрь</span>
<span style="left:227.60px;top:476.52px;font-size:13.5px;line-height:13.5px;color:#000;font-weight:400;font-family:'Liberation Sans',sans-serif;transform:scaleX(0.9114);-webkit-text-stroke:0.1px #000;">78</span>
<span style="left:280.90px;top:476.52px;font-size:13.5px;line-height:13.5px;color:#000;font-weight:400;font-family:'Liberation Sans',sans-serif;transform:scaleX(0.9121);-webkit-text-stroke:0.1px #000;">245908</span>
<span style="left:59.00px;top:496.52px;font-size:13.5px;line-height:13.5px;color:#000;font-weight:400;font-family:'Liberation Sans',sans-serif;transform:scaleX(1.0448);-webkit-text-stroke:0.1px #000;">Декабрь</span>
<span style="left:220.75px;top:496.52px;font-size:13.5px;line-height:13.5px;color:#000;font-weight:400;font-family:'Liberation Sans',sans-serif;transform:scaleX(0.9121);-webkit-text-stroke:0.1px #000;">134</span>
<span style="left:280.90px;top:496.52px;font-size:13.5px;line-height:13.5px;color:#000;font-weight:400;font-family:'Liberation Sans',sans-serif;transform:scaleX(0.9121);-webkit-text-stroke:0.1px #000;">234524</span>
<span style="left:59.00px;top:516.52px;font-size:13.5px;line-height:13.5px;color:#000;font-weight:400;font-family:'Liberation Sans',sans-serif;transform:scaleX(0.9745);-webkit-text-stroke:0.1px #000;">Январь</span>
<span style="left:227.60px;top:516.52px;font-size:13.5px;line-height:13.5px;color:#000;font-weight:400;font-family:'Liberation Sans',sans-serif;transform:scaleX(0.9114);-webkit-text-stroke:0.1px #000;">53</span>
<span style="left:287.75px;top:516.52px;font-size:13.5px;line-height:13.5px;color:#000;font-weight:400;font-family:'Liberation Sans',sans-serif;transform:scaleX(0.9122);-webkit-text-stroke:0.1px #000;">34534</span>
<span style="left:59.00px;top:536.52px;font-size:13.5px;line-height:13.5px;color:#000;font-weight:400;font-family:'Liberation Sans',sans-serif;-webkit-text-stroke:0.1px #000;">Февраль</span>
<span style="left:227.60px;top:536.52px;font-size:13.5px;line-height:13.5px;color:#000;font-weight:400;font-family:'Liberation Sans',sans-serif;transform:scaleX(0.9114);-webkit-text-stroke:0.1px #000;">54</span>
<span style="left:287.75px;top:536.52px;font-size:13.5px;line-height:13.5px;color:#000;font-weight:400;font-family:'Liberation Sans',sans-serif;transform:scaleX(0.9122);-webkit-text-stroke:0.1px #000;">76345</span>
<span style="left:59.00px;top:556.52px;font-size:13.5px;line-height:13.5px;color:#000;font-weight:400;font-family:'Liberation Sans',sans-serif;transform:scaleX(1.0120);-webkit-text-stroke:0.1px #000;">Март</span>
<span style="left:220.75px;top:556.52px;font-size:13.5px;line-height:13.5px;color:#000;font-weight:400;font-family:'Liberation Sans',sans-serif;transform:scaleX(0.9121);-webkit-text-stroke:0.1px #000;">345</span>
<span style="left:294.60px;top:556.52px;font-size:13.5px;line-height:13.5px;color:#000;font-weight:400;font-family:'Liberation Sans',sans-serif;transform:scaleX(0.9119);-webkit-text-stroke:0.1px #000;">2653</span>
<span style="left:59.00px;top:576.52px;font-size:13.5px;line-height:13.5px;color:#000;font-weight:400;font-family:'Liberation Sans',sans-serif;transform:scaleX(1.0547);-webkit-text-stroke:0.1px #000;">Апрель</span>
<span style="left:227.60px;top:576.52px;font-size:13.5px;line-height:13.5px;color:#000;font-weight:400;font-family:'Liberation Sans',sans-serif;transform:scaleX(0.9114);-webkit-text-stroke:0.1px #000;">34</span>
<span style="left:280.90px;top:576.52px;font-size:13.5px;line-height:13.5px;color:#000;font-weight:400;font-family:'Liberation Sans',sans-serif;transform:scaleX(0.9121);-webkit-text-stroke:0.1px #000;">178000</span>
<span style="left:59.00px;top:596.52px;font-size:13.5px;line-height:13.5px;color:#000;font-weight:400;font-family:'Liberation Sans',sans-serif;transform:scaleX(1.0207);-webkit-text-stroke:0.1px #000;">Май</span>
<span style="left:227.60px;top:596.52px;font-size:13.5px;line-height:13.5px;color:#000;font-weight:400;font-family:'Liberation Sans',sans-serif;transform:scaleX(0.9114);-webkit-text-stroke:0.1px #000;">43</span>
<span style="left:301.45px;top:596.52px;font-size:13.5px;line-height:13.5px;color:#000;font-weight:400;font-family:'Liberation Sans',sans-serif;transform:scaleX(0.9121);-webkit-text-stroke:0.1px #000;">435</span>
<span style="left:59.00px;top:616.52px;font-size:13.5px;line-height:13.5px;color:#000;font-weight:400;font-family:'Liberation Sans',sans-serif;transform:scaleX(1.0458);-webkit-text-stroke:0.1px #000;">Июнь</span>
<span style="left:227.60px;top:616.52px;font-size:13.5px;line-height:13.5px;color:#000;font-weight:400;font-family:'Liberation Sans',sans-serif;transform:scaleX(0.9114);-webkit-text-stroke:0.1px #000;">22</span>
<span style="left:294.60px;top:616.52px;font-size:13.5px;line-height:13.5px;color:#000;font-weight:400;font-family:'Liberation Sans',sans-serif;transform:scaleX(0.9119);-webkit-text-stroke:0.1px #000;">4234</span>
<span style="left:59.00px;top:636.52px;font-size:13.5px;line-height:13.5px;color:#000;font-weight:400;font-family:'Liberation Sans',sans-serif;transform:scaleX(1.0420);-webkit-text-stroke:0.1px #000;">Июль</span>
<span style="left:227.60px;top:636.52px;font-size:13.5px;line-height:13.5px;color:#000;font-weight:400;font-family:'Liberation Sans',sans-serif;transform:scaleX(0.9114);-webkit-text-stroke:0.1px #000;">43</span>
<span style="left:287.75px;top:636.52px;font-size:13.5px;line-height:13.5px;color:#000;font-weight:400;font-family:'Liberation Sans',sans-serif;transform:scaleX(0.9122);-webkit-text-stroke:0.1px #000;">43543</span>
<span style="left:59.00px;top:656.52px;font-size:13.5px;line-height:13.5px;color:#000;font-weight:400;font-family:'Liberation Sans',sans-serif;transform:scaleX(0.9769);-webkit-text-stroke:0.1px #000;">Август</span>
<span style="left:213.90px;top:656.52px;font-size:13.5px;line-height:13.5px;color:#000;font-weight:400;font-family:'Liberation Sans',sans-serif;transform:scaleX(0.9119);-webkit-text-stroke:0.1px #000;">5363</span>
<span style="left:287.75px;top:656.52px;font-size:13.5px;line-height:13.5px;color:#000;font-weight:400;font-family:'Liberation Sans',sans-serif;transform:scaleX(0.9122);-webkit-text-stroke:0.1px #000;">45234</span>
<span style="left:59.00px;top:676.52px;font-size:13.5px;line-height:13.5px;color:#000;font-weight:400;font-family:'Liberation Sans',sans-serif;transform:scaleX(0.9821);-webkit-text-stroke:0.1px #000;">Сентябрь</span>
<span style="left:220.75px;top:676.52px;font-size:13.5px;line-height:13.5px;color:#000;font-weight:400;font-family:'Liberation Sans',sans-serif;transform:scaleX(0.9121);-webkit-text-stroke:0.1px #000;">324</span>
<span style="left:280.90px;top:676.52px;font-size:13.5px;line-height:13.5px;color:#000;font-weight:400;font-family:'Liberation Sans',sans-serif;transform:scaleX(0.9121);-webkit-text-stroke:0.1px #000;">543534</span>
<span style="left:59.00px;top:696.52px;font-size:13.5px;line-height:13.5px;color:#000;font-weight:400;font-family:'Liberation Sans',sans-serif;transform:scaleX(1.0128);-webkit-text-stroke:0.1px #000;">Октябрь</span>
<span style="left:227.60px;top:696.52px;font-size:13.5px;line-height:13.5px;color:#000;font-weight:400;font-family:'Liberation Sans',sans-serif;transform:scaleX(0.9114);-webkit-text-stroke:0.1px #000;">31</span>
<span style="left:294.60px;top:696.52px;font-size:13.5px;line-height:13.5px;color:#000;font-weight:400;font-family:'Liberation Sans',sans-serif;transform:scaleX(0.9119);-webkit-text-stroke:0.1px #000;">4524</span>
<span style="left:59.00px;top:716.52px;font-size:13.5px;line-height:13.5px;color:#000;font-weight:400;font-family:'Liberation Sans',sans-serif;transform:scaleX(0.9969);-webkit-text-stroke:0.1px #000;">Ноябрь</span>
<span style="left:227.60px;top:716.52px;font-size:13.5px;line-height:13.5px;color:#000;font-weight:400;font-family:'Liberation Sans',sans-serif;transform:scaleX(0.9114);-webkit-text-stroke:0.1px #000;">78</span>
<span style="left:280.90px;top:716.52px;font-size:13.5px;line-height:13.5px;color:#000;font-weight:400;font-family:'Liberation Sans',sans-serif;transform:scaleX(0.9121);-webkit-text-stroke:0.1px #000;">531908</span>
<span style="left:59.00px;top:736.52px;font-size:13.5px;line-height:13.5px;color:#000;font-weight:400;font-family:'Liberation Sans',sans-serif;transform:scaleX(1.0448);-webkit-text-stroke:0.1px #000;">Декабрь</span>
<span style="left:220.75px;top:736.52px;font-size:13.5px;line-height:13.5px;color:#000;font-weight:400;font-family:'Liberation Sans',sans-serif;transform:scaleX(0.9121);-webkit-text-stroke:0.1px #000;">134</span>
<span style="left:280.90px;top:736.52px;font-size:13.5px;line-height:13.5px;color:#000;font-weight:400;font-family:'Liberation Sans',sans-serif;transform:scaleX(0.9121);-webkit-text-stroke:0.1px #000;">234524</span>
<span style="left:502.20px;top:256.52px;font-size:13.5px;line-height:13.5px;color:#000;font-weight:400;font-family:'Liberation Sans',sans-serif;transform:scaleX(0.9121);-webkit-text-stroke:0.1px #000;">543534</span>
<div style="left:57px;top:272px;width:267px;height:1px;background:#000;"></div>
<div style="left:57px;top:292px;width:267px;height:1px;background:#000;"></div>
<div style="left:57px;top:312px;width:267px;height:1px;background:#000;"></div>
<div style="left:57px;top:332px;width:267px;height:1px;background:#000;"></div>
<div style="left:57px;top:352px;width:267px;height:1px;background:#000;"></div>
<div style="left:57px;top:372px;width:267px;height:1px;background:#000;"></div>
<div style="left:57px;top:392px;width:267px;height:1px;background:#000;"></div>
<div style="left:57px;top:412px;width:267px;height:1px;background:#000;"></div>
<div style="left:57px;top:432px;width:267px;height:1px;background:#000;"></div>
<div style="left:57px;top:452px;width:267px;height:1px;background:#000;"></div>
<div style="left:57px;top:472px;width:267px;height:1px;background:#000;"></div>
<div style="left:57px;top:492px;width:267px;height:1px;background:#000;"></div>
<div style="left:57px;top:512px;width:267px;height:1px;background:#000;"></div>
<div style="left:57px;top:532px;width:267px;height:1px;background:#000;"></div>
<div style="left:57px;top:552px;width:267px;height:1px;background:#000;"></div>
<div style="left:57px;top:572px;width:267px;height:1px;background:#000;"></div>
<div style="left:57px;top:592px;width:267px;height:1px;background:#000;"></div>
<div style="left:57px;top:612px;width:267px;height:1px;background:#000;"></div>
<div style="left:57px;top:632px;width:267px;height:1px;background:#000;"></div>
<div style="left:57px;top:652px;width:267px;height:1px;background:#000;"></div>
<div style="left:57px;top:672px;width:267px;height:1px;background:#000;"></div>
<div style="left:57px;top:692px;width:267px;height:1px;background:#000;"></div>
<div style="left:57px;top:712px;width:267px;height:1px;background:#000;"></div>
<div style="left:57px;top:732px;width:267px;height:1px;background:#000;"></div>
<div style="left:57px;top:752px;width:267px;height:1px;background:#000;"></div>
<div style="left:151px;top:253px;width:1px;height:500px;background:#000;"></div>
<div style="left:243px;top:253px;width:1px;height:500px;background:#000;"></div>
<div style="left:324px;top:253px;width:1px;height:500px;background:#000;"></div>
<div style="left:387px;top:411px;width:159px;height:2px;background:#217346;"></div>
<div style="left:387px;top:411px;width:2px;height:23px;background:#217346;"></div>
<div style="left:545px;top:411px;width:2px;height:18px;background:#217346;"></div>
<div style="left:387px;top:432px;width:155px;height:2px;background:#217346;"></div>
<div style="left:543px;top:430px;width:5px;height:5px;background:#217346;outline:1px solid #fff;"></div>
<div style="left:896px;top:232px;width:16px;height:528px;background:#e6e6e6;"></div>
<div style="left:896px;top:232px;width:1px;height:528px;background:#a0a0a0;"></div>
<div style="left:900px;top:235px;width:12px;height:16px;box-sizing:border-box;border:1px solid #c6c6c6;background:#f7f7f7;"></div>
<svg style="left:904px;top:240px;" width="6" height="4" viewBox="0 0 6 4"><path d="M0.5 3.5L3 0.5L5.5 3.5Z" fill="#707070"/></svg>
<div style="left:900px;top:250px;width:12px;height:476px;box-sizing:border-box;border:1px solid #c6c6c6;background:#fff;"></div>
<div style="left:900px;top:726px;width:12px;height:20px;background:#dadada;"></div>
<div style="left:900px;top:746px;width:12px;height:14px;box-sizing:border-box;border:1px solid #c6c6c6;background:#fff;"></div>
<svg style="left:904px;top:752px;" width="7" height="4" viewBox="0 0 7 4"><path d="M0 0H7L3.5 4Z" fill="#606060"/></svg>
<div style="left:32px;top:760px;width:880px;height:28px;background:#e6e6e6;"></div>
<div style="left:32px;top:760px;width:880px;height:1px;background:#c6c6c6;"></div>
<svg style="left:57px;top:769px;" width="6" height="8" viewBox="0 0 6 8"><path d="M5 0.5L1 4L5 7.5Z" fill="#c0c0c0"/></svg>
<svg style="left:86px;top:769px;" width="6" height="8" viewBox="0 0 6 8"><path d="M1 0.5L5 4L1 7.5Z" fill="#c0c0c0"/></svg>
<div style="left:131px;top:760px;width:60px;height:24px;background:#fff;border-left:1px solid #a8a8a8;border-right:1px solid #a8a8a8;box-sizing:border-box;"></div>
<div style="left:131px;top:783px;width:60px;height:2px;background:#217346;"></div>
<span style="left:143.40px;top:767.38px;font-size:12.5px;line-height:12.5px;color:#217346;font-weight:700;font-family:'Liberation Sans',sans-serif;transform:scaleX(0.9401);">Лист1</span>
<svg style="left:224px;top:767px;" width="16" height="16" viewBox="0 0 16 16"><circle cx="8" cy="7.5" r="7" fill="none" stroke="#6d6d6d" stroke-width="1.2"/><path d="M8 3.5V11.5M4 7.5H12" stroke="#6d6d6d" stroke-width="1.6"/></svg>
<div style="left:563px;top:769px;width:2px;height:2px;background:#a6a6a6;"></div>
<div style="left:563px;top:773px;width:2px;height:2px;background:#a6a6a6;"></div>
<div style="left:563px;top:777px;width:2px;height:2px;background:#a6a6a6;"></div>
<div style="left:580px;top:767px;width:317px;height:15px;box-sizing:border-box;border:1px solid #c6c6c6;background:#dcdcdc;"></div>
<div style="left:594px;top:767px;width:259px;height:15px;box-sizing:border-box;border:1px solid #c6c6c6;background:#fff;"></div>
<svg style="left:584px;top:770px;" width="5" height="9" viewBox="0 0 5 9"><path d="M4.5 0.5L0.5 4.5L4.5 8.5Z" fill="#5f5f5f"/></svg>
<svg style="left:887px;top:770px;" width="5" height="9" viewBox="0 0 5 9"><path d="M0.5 0.5L4.5 4.5L0.5 8.5Z" fill="#5f5f5f"/></svg>
<div style="left:580px;top:767px;width:14px;height:15px;background:transparent;border-right:1px solid #c6c6c6;box-sizing:border-box;"></div>
<div style="left:882px;top:767px;width:15px;height:15px;background:#f7f7f7;border:1px solid #c6c6c6;box-sizing:border-box;"></div>
<svg style="left:887px;top:770px;" width="5" height="9" viewBox="0 0 5 9"><path d="M0.5 0.5L4.5 4.5L0.5 8.5Z" fill="#5f5f5f"/></svg>
<div style="left:32px;top:788px;width:880px;height:19px;background:#f3f3f3;"></div>
<div style="left:32px;top:806px;width:880px;height:1px;background:#fff;"></div>
<svg style="left:39px;top:792px;" width="13" height="13" viewBox="0 0 13 13"><circle cx="3" cy="3" r="2.6" fill="#6d6d6d"/><rect x="3.5" y="5" width="9" height="7.5" fill="#fff" stroke="#6d6d6d" stroke-width="0.9"/><path d="M3.5 7.5H12.5M3.5 10H12.5M6.5 5V12.5M9.5 5V12.5" stroke="#6d6d6d" stroke-width="0.7"/></svg>
<div style="left:604px;top:788px;width:40px;height:19px;background:#c8c8c8;"></div>
<svg style="left:617px;top:791px;" width="14" height="14" viewBox="0 0 14 14"><rect x="0.5" y="0.5" width="13" height="13" fill="none" stroke="#6d6d6d"/><path d="M0.5 4.8H13.5M0.5 9.2H13.5M4.8 0.5V13.5M9.2 0.5V13.5" stroke="#6d6d6d" stroke-width="1"/></svg>
<svg style="left:657px;top:791px;" width="14" height="15" viewBox="0 0 14 15"><rect x="0.5" y="0.5" width="13" height="14" fill="none" stroke="#6d6d6d"/><rect x="3" y="3" width="8" height="9" fill="none" stroke="#6d6d6d"/><path d="M4.5 5.5H9.5M4.5 7.5H9.5M4.5 9.5H9.5" stroke="#6d6d6d" stroke-width="0.8"/></svg>
<svg style="left:697px;top:791px;" width="15" height="14" viewBox="0 0 15 14"><rect x="0.5" y="0.5" width="13" height="13" fill="none" stroke="#6d6d6d" stroke-width="1.1"/><path d="M4.5 0.5V6.5H9.5V0.5" fill="none" stroke="#6d6d6d" stroke-width="1.1"/></svg>
<div style="left:730px;top:799px;width:7px;height:1.3px;background:#444;"></div>
<div style="left:743px;top:799px;width:100px;height:1px;background:#a6a6a6;"></div>
<div style="left:791px;top:794px;width:5px;height:11px;background:#6d6d6d;"></div>
<div style="left:848px;top:799px;width:8px;height:1px;background:#444;"></div>
<div style="left:851.5px;top:795px;width:1px;height:9px;background:#444;"></div>
<span style="left:869.00px;top:793.65px;font-size:11px;line-height:11px;color:#444;font-weight:400;font-family:'Liberation Sans',sans-serif;transform:scaleX(0.9454);">100 %</span>
<div style="left:651px;top:185px;width:255px;height:91px;background:#fff;box-shadow:2px 2px 6px rgba(0,0,0,0.22);border:1px solid #d0d0d0;box-sizing:border-box;"></div>
<svg style="left:662px;top:190px;" width="15" height="15" viewBox="0 0 15 15"><path d="M14 3.5V0.8H0.8L7.2 7.5L0.8 14.2H14V11.5" fill="none" stroke="#404040" stroke-width="1.6" stroke-linejoin="miter"/></svg>
<span style="left:681.20px;top:192.80px;font-size:12px;line-height:12px;color:#262626;font-weight:400;font-family:'Liberation Sans',sans-serif;letter-spacing:-0.023px;">Автосумма</span>
<svg style="left:663px;top:213px;" width="14" height="16" viewBox="0 0 14 16"><rect x="0.5" y="0.5" width="13" height="15" fill="#fff" stroke="#7a7a7a"/><rect x="0.5" y="0.5" width="13" height="2.5" fill="#7a7a7a"/><path d="M7 5.5V12.5M4 9.5L7 12.5L10 9.5" fill="none" stroke="#3f7fc0" stroke-width="1.8"/></svg>
<span style="left:681.20px;top:215.30px;font-size:12px;line-height:12px;color:#262626;font-weight:400;font-family:'Liberation Sans',sans-serif;letter-spacing:-0.047px;">Заполнить</span>
<svg style="left:743.5px;top:220.5px;" width="5" height="3" viewBox="0 0 5 3"><path d="M0 0H5L2.5 3Z" fill="#5f5f5f"/></svg>
<svg style="left:663px;top:237px;" width="14" height="14" viewBox="0 0 14 14"><path d="M8.5 0.8L13.2 5.5L7 11.7L2.3 7Z" fill="#e88d9e"/><path d="M2.3 7L7 11.7L5.5 13.2H3L0.8 11L0.8 8.5Z" fill="#f2b7c2"/></svg>
<span style="left:681.80px;top:238.30px;font-size:12px;line-height:12px;color:#262626;font-weight:400;font-family:'Liberation Sans',sans-serif;letter-spacing:-0.156px;">Очистить</span>
<svg style="left:736.5px;top:243.5px;" width="5" height="3" viewBox="0 0 5 3"><path d="M0 0H5L2.5 3Z" fill="#5f5f5f"/></svg>
<div style="left:761px;top:186px;width:73px;height:69px;background:#c6c6c6;"></div>
<span style="left:783.20px;top:191.02px;font-size:15.5px;line-height:15.5px;color:#3c7dc0;font-weight:700;font-family:'Liberation Sans',sans-serif;transform:scaleX(0.9640);">А</span>
<span style="left:784.20px;top:205.32px;font-size:15.5px;line-height:15.5px;color:#9a6ec6;font-weight:700;font-family:'Liberation Sans',sans-serif;transform:scaleX(0.7899);">Я</span>
<svg style="left:794px;top:199px;" width="20" height="17" viewBox="0 0 20 17"><path d="M1 1H18.5L11.5 7.5V15.5H8V7.5Z" fill="#7a7a7a" stroke="#fff" stroke-width="1.6" stroke-linejoin="round"/></svg>
<span style="left:765.20px;top:227.80px;font-size:12px;line-height:12px;color:#262626;font-weight:400;font-family:'Liberation Sans',sans-serif;letter-spacing:-0.056px;">Сортировка</span>
<span style="left:769.60px;top:243.10px;font-size:12px;line-height:12px;color:#262626;font-weight:400;font-family:'Liberation Sans',sans-serif;letter-spacing:-0.176px;">и фильтр</span>
<svg style="left:823px;top:247.5px;" width="5" height="3" viewBox="0 0 5 3"><path d="M0 0H5L2.5 3Z" fill="#5f5f5f"/></svg>
<svg style="left:850px;top:191px;" width="31" height="29" viewBox="0 0 31 29"><circle cx="18.5" cy="11.5" r="9" fill="none" stroke="#3c7dc0" stroke-width="2.6"/><path d="M12 18L3.5 26.5" stroke="#3c7dc0" stroke-width="3.4" stroke-linecap="round"/></svg>
<span style="left:844.60px;top:227.80px;font-size:12px;line-height:12px;color:#262626;font-weight:400;font-family:'Liberation Sans',sans-serif;letter-spacing:-0.183px;">Найти и</span>
<span style="left:837.00px;top:243.10px;font-size:12px;line-height:12px;color:#262626;font-weight:400;font-family:'Liberation Sans',sans-serif;letter-spacing:-0.392px;">выделить</span>
<svg style="left:891.3px;top:247.5px;" width="5" height="3" viewBox="0 0 5 3"><path d="M0 0H5L2.5 3Z" fill="#5f5f5f"/></svg>
<div style="left:688px;top:257px;width:220px;height:148px;background:#fff;box-shadow:2px 2px 6px rgba(0,0,0,0.22);border:1px solid #d0d0d0;box-sizing:border-box;"></div>
<span style="left:696.00px;top:260.73px;font-size:9.5px;line-height:9.5px;color:#3c7dc0;font-weight:700;font-family:'Liberation Sans',sans-serif;transform:scaleX(0.9891);">А</span>
<span style="left:696.00px;top:268.73px;font-size:9.5px;line-height:9.5px;color:#9a6ec6;font-weight:700;font-family:'Liberation Sans',sans-serif;transform:scaleX(0.9959);">Я</span>
<svg style="left:704px;top:262px;" width="6" height="15" viewBox="0 0 6 15"><path d="M3 0.5V14M0.5 11.2L3 14L5.5 11.2" fill="none" stroke="#555" stroke-width="1"/></svg>
<span style="left:722.80px;top:263.80px;font-size:12px;line-height:12px;color:#444444;font-weight:400;font-family:'Liberation Sans',sans-serif;letter-spacing:-0.223px;">Сортировка от А до Я</span>
<div style="left:807px;top:275.5px;width:6.5px;height:1px;background:#444444;"></div>
<span style="left:696.00px;top:284.73px;font-size:9.5px;line-height:9.5px;color:#9a6ec6;font-weight:700;font-family:'Liberation Sans',sans-serif;transform:scaleX(0.9959);">Я</span>
<span style="left:696.00px;top:292.73px;font-size:9.5px;line-height:9.5px;color:#3c7dc0;font-weight:700;font-family:'Liberation Sans',sans-serif;transform:scaleX(0.9891);">А</span>
<svg style="left:704px;top:286px;" width="6" height="15" viewBox="0 0 6 15"><path d="M3 0.5V14M0.5 11.2L3 14L5.5 11.2" fill="none" stroke="#555" stroke-width="1"/></svg>
<span style="left:722.80px;top:287.80px;font-size:12px;line-height:12px;color:#444444;font-weight:400;font-family:'Liberation Sans',sans-serif;letter-spacing:-0.223px;">Сортировка от Я до А</span>
<div style="left:807px;top:299.5px;width:6px;height:1px;background:#444444;"></div>
<svg style="left:694px;top:310px;" width="16" height="16" viewBox="0 0 16 16"><rect x="0.5" y="0.5" width="15" height="15" fill="#fff" stroke="#7a7a7a"/><rect x="0.5" y="0.5" width="15" height="2" fill="#44546a"/><path d="M5 4.5V13M2.8 10.8L5 13L7.2 10.8" fill="none" stroke="#3c7dc0" stroke-width="1.3"/><path d="M11 13V4.5M8.8 6.7L11 4.5L13.2 6.7" fill="none" stroke="#9a6ec6" stroke-width="1.3"/></svg>
<span style="left:722.80px;top:311.80px;font-size:12px;line-height:12px;color:#444444;font-weight:400;font-family:'Liberation Sans',sans-serif;letter-spacing:-0.023px;">Настраиваемая сортировка</span>
<div style="left:722px;top:323.5px;width:9px;height:1px;background:#444444;"></div>
<div style="left:722px;top:330px;width:183px;height:1px;background:#dadada;"></div>
<svg style="left:694px;top:337px;" width="15" height="14" viewBox="0 0 15 14"><path d="M0.3 0.5H14.7L9.6 6.2V13.8H5.4V6.2Z" fill="#595959"/></svg>
<span style="left:722.80px;top:337.80px;font-size:12px;line-height:12px;color:#444444;font-weight:400;font-family:'Liberation Sans',sans-serif;letter-spacing:-0.052px;">Фильтр</span>
<div style="left:722px;top:349.5px;width:9px;height:1px;background:#262626;"></div>
<svg style="left:694px;top:361px;" width="17" height="16" viewBox="0 0 17 16"><path d="M0.5 0.5H12.5L8 5V11.5H5.5V5Z" fill="#b8b8b8"/><path d="M8 9L15 15.5M15 9L8 15.5" stroke="#b0b0b0" stroke-width="1.1"/></svg>
<span style="left:722.80px;top:361.80px;font-size:12px;line-height:12px;color:#b4b4b4;font-weight:400;font-family:'Liberation Sans',sans-serif;letter-spacing:-0.231px;">Очистить</span>
<div style="left:731.5px;top:373.5px;width:6.5px;height:1px;background:#b4b4b4;"></div>
<svg style="left:694px;top:385px;" width="17" height="16" viewBox="0 0 17 16"><path d="M0.5 0.5H12.5L8 5V11.5H5.5V5Z" fill="#b8b8b8"/><path d="M9 11A3.5 3.5 0 0 1 15.5 10M15.5 12.5A3.5 3.5 0 0 1 9 13.5" fill="none" stroke="#b0b0b0" stroke-width="1.1"/></svg>
<span style="left:722.80px;top:385.80px;font-size:12px;line-height:12px;color:#b4b4b4;font-weight:400;font-family:'Liberation Sans',sans-serif;letter-spacing:-0.098px;">Повторить</span>
<div style="left:722px;top:397.5px;width:9px;height:1px;background:#b4b4b4;"></div>
<div style="left:757px;top:179px;width:81px;height:83px;background:transparent;border:4px solid #ff0000;border-radius:10px;box-sizing:border-box;filter:drop-shadow(2px 3px 2.5px rgba(0,0,0,0.6));"></div>
<div style="left:686px;top:255px;width:200px;height:52px;background:transparent;border:4px solid #ff0000;border-radius:10px;box-sizing:border-box;filter:drop-shadow(2px 3px 2.5px rgba(0,0,0,0.6));"></div>
<svg style="left:723.0px;top:149.3px;" width="53" height="53" viewBox="0 0 53 53"><defs><radialGradient id="g1" cx="30%" cy="28%" r="80%"><stop offset="0" stop-color="#ffa070"/><stop offset="0.55" stop-color="#ff5a22"/><stop offset="1" stop-color="#ff3a00"/></radialGradient><filter id="f1" x="-20%" y="-20%" width="150%" height="150%"><feDropShadow dx="1" dy="1.5" stdDeviation="1.2" flood-opacity="0.45"/></filter></defs><circle cx="25.5" cy="25.5" r="23.0" fill="url(#g1)" stroke="#c9350c" stroke-width="1" filter="url(#f1)"/><path transform="translate(18.70 14.00)" d="M4.6 0.3H11.2V22.4H4.6V8.6L0.3 10.6V4.5Z" fill="#fff" stroke="#151515" stroke-width="2" paint-order="stroke" stroke-linejoin="round"/></svg>
<svg style="left:868.6px;top:287.6px;" width="52" height="52" viewBox="0 0 52 52"><defs><radialGradient id="g2" cx="30%" cy="28%" r="80%"><stop offset="0" stop-color="#ffa070"/><stop offset="0.55" stop-color="#ff5a22"/><stop offset="1" stop-color="#ff3a00"/></radialGradient><filter id="f2" x="-20%" y="-20%" width="150%" height="150%"><feDropShadow dx="1" dy="1.5" stdDeviation="1.2" flood-opacity="0.45"/></filter></defs><circle cx="25.0" cy="25.0" r="22.5" fill="url(#g2)" stroke="#c9350c" stroke-width="1" filter="url(#f2)"/><path transform="translate(16.70 14.40)" d="M0.9 5.6C1.8 2.1 4.6 0.2 8 0.2C12.2 0.2 14.8 2.7 14.8 6.1C14.8 9.6 12.3 12.1 7.2 16.7H15.1V21.4H0.5V17.9C6.6 12.1 9.4 9.5 9.4 6.7C9.4 5.1 8.5 4.3 7.2 4.3C5.6 4.3 4.4 5.4 3.6 6.9Z" fill="#fff" stroke="#151515" stroke-width="2" paint-order="stroke" stroke-linejoin="round"/></svg>
</body></html>
